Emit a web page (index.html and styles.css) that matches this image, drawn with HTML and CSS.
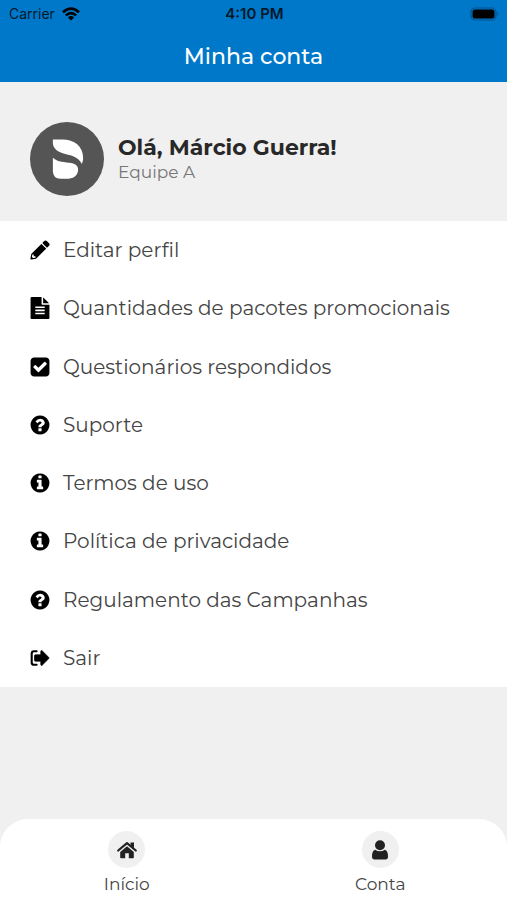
FILE: index.html
```html
<!DOCTYPE html>
<html lang="pt-BR">
<head>
<meta charset="utf-8">
<meta name="viewport" content="width=device-width, initial-scale=1">
<title>Minha conta</title>
<link rel="stylesheet" href="styles.css">
</head>
<body>
<header class="header">
  <div class="status">
    <div class="status-left">
      <span>Carrier</span>
      <svg class="wifi" viewBox="0 0 18 14" aria-hidden="true"><g fill="none" stroke="currentColor" stroke-width="2.6"><path d="M1 5.2Q9-2 17 5.2"/><path d="M3.8 8.4Q9 3.8 14.2 8.4"/></g><path d="M9 13.6 5.9 10.4Q9 7.7 12.1 10.4Z" fill="currentColor"/></svg>
    </div>
    <span class="clock">4:10 PM</span>
    <div class="status-right">
      <svg class="battery" viewBox="0 0 30 14" aria-hidden="true"><rect x="1" y="1" width="25" height="12" rx="4" fill="none" stroke="#00528f" stroke-width="1.2"/><rect x="2.5" y="2.5" width="22" height="9" rx="2.5" fill="#000"/><path d="M27.5 5q2 2 0 4z" fill="#00528f"/></svg>
    </div>
  </div>
  <h1 class="title">Minha conta</h1>
</header>
<main class="content">
  <section class="profile">
    <svg class="avatar" viewBox="0 0 220 220" aria-hidden="true"><circle cx="110" cy="110" r="110" fill="#555"/><path fill="#fff" d="M68 52H96C132 52 158 72 158 107Q158 117 154 125C148 110 132 101 113 97C92 93 70 85 68 65ZM68 106C84 120 103 118 123 122C137 125 144 132 143 143C142 162 127 169 109 169H91Q68 168 68 146Z"/></svg>
    <div>
      <h2 class="name">Olá, Márcio Guerra!</h2>
      <p class="team">Equipe A</p>
    </div>
  </section>
  <ul class="menu">
    <li><a href="#perfil"><svg class="icon" viewBox="-38 -38 588 588" aria-hidden="true"><path fill-rule="evenodd" d="M497.900 142.100l-46.100 46.100c-4.700 4.700-12.300 4.700-17 0l-111-111c-4.700-4.700-4.700-12.300 0-17l46.100-46.100c18.700-18.700 49.100-18.700 67.900 0l60.100 60.100c18.800 18.700 18.800 49.100 0 67.900zM284.200 99.800L21.600 362.400.4 483.900c-2.900 16.400 11.400 30.600 27.800 27.800l121.500-21.300 262.600-262.600c4.700-4.700 4.700-12.300 0-17l-111-111c-4.800-4.700-12.400-4.700-17.100 0zM88 424h48v36.300l-64.500 11.300-31.100-31.100L51.700 376H88v48z"/></svg>Editar perfil</a></li>
    <li><a href="#pacotes"><svg class="icon" viewBox="0 0 1792 1792" aria-hidden="true"><path d="M1596 476q14 14 28 36h-472v-472q22 14 36 28zm-476 164h544v1056q0 40-28 68t-68 28h-1344q-40 0-68-28t-28-68v-1600q0-40 28-68t68-28h800v544q0 40 28 68t68 28zm160 736v-64q0-14-9-23t-23-9h-704q-14 0-23 9t-9 23v64q0 14 9 23t23 9h704q14 0 23-9t9-23zm0-256v-64q0-14-9-23t-23-9h-704q-14 0-23 9t-9 23v64q0 14 9 23t23 9h704q14 0 23-9t9-23zm0-256v-64q0-14-9-23t-23-9h-704q-14 0-23 9t-9 23v64q0 14 9 23t23 9h704q14 0 23-9t9-23z"/></svg>Quantidades de pacotes promocionais</a></li>
    <li><a href="#questionarios"><svg class="icon" viewBox="0 0 1792 1792" aria-hidden="true"><path d="M813 1299l614-614q19-19 19-45t-19-45l-102-102q-19-19-45-19t-45 19l-467 467-211-211q-19-19-45-19t-45 19l-102 102q-19 19-19 45t19 45l358 358q19 19 45 19t45-19zm851-883v960q0 119-84.5 203.5t-203.5 84.5h-960q-119 0-203.5-84.5t-84.5-203.5v-960q0-119 84.5-203.5t203.5-84.5h960q119 0 203.5 84.5t84.5 203.5z"/></svg>Questionários respondidos</a></li>
    <li><a href="#suporte"><svg class="icon" viewBox="0 0 1792 1792" aria-hidden="true"><path id="question" d="M1024 1376v-192q0-14-9-23t-23-9h-192q-14 0-23 9t-9 23v192q0 14 9 23t23 9h192q14 0 23-9t9-23zm256-672q0-88-55.5-163t-138.5-116-170-41q-243 0-371 213-15 24 8 42l132 100q7 6 19 6 16 0 25-12 53-68 86-92 34-24 86-24 48 0 85.5 26t37.5 59q0 38-20 61t-68 45q-63 28-115.5 86.5t-52.5 125.5v36q0 14 9 23t23 9h192q14 0 23-9t9-23q0-19 21.5-49.5t54.5-49.5q32-18 49-28.5t46-35 44.5-48 28-60.5 12.5-81zm384 192q0 209-103 385.5t-279.5 279.5-385.5 103-385.5-103-279.5-279.5-103-385.5 103-385.5 279.5-279.5 385.5-103 385.5 103 279.5 279.5 103 385.5z"/></svg>Suporte</a></li>
    <li><a href="#termos"><svg class="icon" viewBox="0 0 1792 1792" aria-hidden="true"><path id="info" d="M1152 1376v-160q0-14-9-23t-23-9h-96v-512q0-14-9-23t-23-9h-320q-14 0-23 9t-9 23v160q0 14 9 23t23 9h96v320h-96q-14 0-23 9t-9 23v160q0 14 9 23t23 9h448q14 0 23-9t9-23zm-128-896v-160q0-14-9-23t-23-9h-192q-14 0-23 9t-9 23v160q0 14 9 23t23 9h192q14 0 23-9t9-23zm640 416q0 209-103 385.5t-279.5 279.5-385.5 103-385.5-103-279.5-279.5-103-385.5 103-385.5 279.5-279.5 385.5-103 385.5 103 279.5 279.5 103 385.5z"/></svg>Termos de uso</a></li>
    <li><a href="#privacidade"><svg class="icon" viewBox="0 0 1792 1792" aria-hidden="true"><use href="#info"/></svg>Política de privacidade</a></li>
    <li><a href="#regulamento"><svg class="icon" viewBox="0 0 1792 1792" aria-hidden="true"><use href="#question"/></svg>Regulamento das Campanhas</a></li>
    <li><a href="#sair"><svg class="icon" viewBox="0 0 1792 1792" aria-hidden="true"><path fill="none" stroke="currentColor" stroke-width="170" stroke-linecap="round" d="M620 1450H410Q220 1450 220 1260V532Q220 342 410 342H620"/><path stroke="currentColor" stroke-width="60" stroke-linejoin="round" d="M1632 896q0 26-19 45l-544 544q-19 19-45 19t-45-19-19-45v-288h-448q-26 0-45-19t-19-45v-384q0-26 19-45t45-19h448v-288q0-26 19-45t45-19 45 19l544 544q19 19 19 45z"/></svg>Sair</a></li>
  </ul>
</main>
<nav class="tabs">
  <a href="#inicio"><span class="bubble"><svg viewBox="0 0 22 22" aria-hidden="true"><path d="M14.500 3.500h3.500v6l-3.500-3z"/><path fill="none" stroke="currentColor" stroke-width="2.200" stroke-linecap="round" stroke-linejoin="round" d="M2.200 11.500 11 4.200l8.800 7.300"/><path d="M11 7.300 17.800 13v5.500q0 .8-.8.800h-4.200v-5H9.200v5H5q-.8 0-.8-.8V13z"/></svg></span>Início</a>
  <a href="#conta" aria-current="page"><span class="bubble"><svg viewBox="0 0 22 22" aria-hidden="true"><circle cx="11" cy="6.300" r="5"/><path d="M6.300 10.700Q8.200 12.300 11 12.300T15.700 10.700Q19 11.300 19 17.500 19 20.500 16.500 20.500H5.500Q3 20.500 3 17.500 3 11.300 6.300 10.700Z"/></svg></span>Conta</a>
</nav>
</body>
</html>
```
FILE: styles.css
```css
* {
  box-sizing: border-box;
}

body {
  margin: 0;
  min-height: 100vh;
  display: flex;
  flex-direction: column;
  background: #f0f0f0;
  color: #444;
  font-family: Montserrat, Inter, "Liberation Sans", sans-serif;
}

h1, h2, p, ul {
  margin: 0;
  padding: 0;
}

a {
  color: inherit;
  text-decoration: none;
}

svg {
  display: block;
  flex: none;
  fill: currentColor;
}

.header {
  background: #0078c9;
}

.status {
  display: grid;
  grid-template-columns: 1fr auto 1fr;
  align-items: center;
  height: 27px;
  padding: 0 7px 0 9px;
  color: #05182a;
  font-family: Inter, "Liberation Sans", sans-serif;
  font-size: 14px;
}

.status-left {
  display: flex;
  align-items: center;
  gap: 7px;
}

.status-right {
  display: flex;
  justify-content: flex-end;
}

.wifi {
  width: 18px;
  height: 14px;
  color: #000;
}

.battery {
  width: 30px;
  height: 14px;
}

.clock {
  font-size: 15px;
  font-weight: 600;
}

.title {
  color: #fff;
  font-size: 22px;
  font-weight: 500;
  line-height: 27px;
  padding: 16px 0 12px;
  text-align: center;
}

.content {
  flex: 1;
}

.profile {
  display: flex;
  align-items: center;
  gap: 14px;
  padding: 40px 30px 25px;
}

.avatar {
  width: 74px;
  height: 74px;
}

.name {
  color: #282828;
  font-size: 22px;
  font-weight: 700;
  line-height: 26px;
}

.team {
  color: #777;
  font-size: 17px;
  line-height: 22px;
}

.menu {
  display: grid;
  grid-auto-rows: 1fr;
  min-height: 466px;
  list-style: none;
  background: #fff;
}

.menu a {
  display: flex;
  align-items: center;
  gap: 12px;
  height: 100%;
  padding: 0 29px;
  font-size: 20px;
}

.icon {
  width: 22px;
  height: 22px;
  color: #000;
  overflow: visible;
}

.tabs {
  display: flex;
  background: #fff;
  border-radius: 28px 28px 0 0;
  padding: 12px 0 4px;
}

.tabs a {
  flex: 1;
  display: flex;
  flex-direction: column;
  align-items: center;
  gap: 4px;
  font-size: 17px;
  line-height: 24px;
}

.bubble {
  display: flex;
  align-items: center;
  justify-content: center;
  width: 37px;
  height: 37px;
  border-radius: 50%;
  background: #f0f0f0;
  color: #222;
}

.bubble svg {
  width: 22px;
  height: 22px;
}
```
